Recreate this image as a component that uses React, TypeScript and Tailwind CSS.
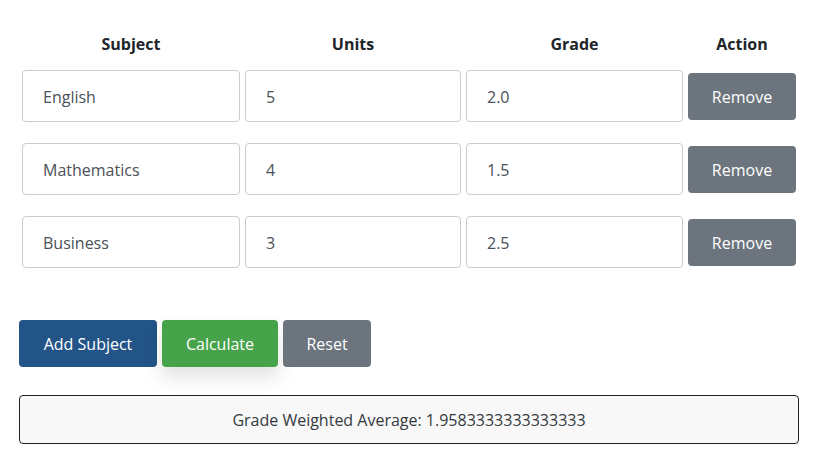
const subjects = [
  { name: "English", units: "5", grade: "2.0" },
  { name: "Mathematics", units: "4", grade: "1.5" },
  { name: "Business", units: "3", grade: "2.5" },
];

const cols = "grid grid-cols-[218px_216px_217px_108px] gap-x-[5px]";

export default function App() {
  return (
    <main
      className="min-h-screen bg-white text-[16px] text-[#212529]"
      style={{ fontFamily: '"Open Sans", "Noto Sans", sans-serif' }}
    >
      <div className="px-[19px] pt-[32px]">
        <div className={`${cols} px-[3px]`}>
          {["Subject", "Units", "Grade", "Action"].map((h) => (
            <div key={h} className="h-[24px] text-center font-bold leading-[24px]">
              {h}
            </div>
          ))}
        </div>

        <div className="mt-[14px] flex flex-col gap-y-[21px] px-[3px]">
          {subjects.map((s) => (
            <div key={s.name} className={`${cols} items-center`}>
              <div className="flex h-[52px] items-center rounded-[4px] border border-[#cccccc] pl-[20px] pt-[1px] text-[#495057]">
                {s.name}
              </div>
              <div className="flex h-[52px] items-center rounded-[4px] border border-[#cccccc] pl-[20px] pt-[1px] text-[#495057]">
                {s.units}
              </div>
              <div className="flex h-[52px] items-center rounded-[4px] border border-[#cccccc] pl-[20px] pt-[1px] text-[#495057]">
                {s.grade}
              </div>
              <button className="h-[47px] rounded-[4px] bg-[#6c757d] pt-[1px] text-white">
                Remove
              </button>
            </div>
          ))}
        </div>

        <div className="mt-[52px] flex gap-x-[5px]">
          <button className="h-[47px] w-[138px] rounded-[4px] bg-[#235487] pt-[1px] text-white">
            Add Subject
          </button>
          <button className="h-[47px] w-[116px] rounded-[4px] bg-[#46a34a] pt-[1px] text-white shadow-[0_10px_20px_rgba(0,0,0,0.12)]">
            Calculate
          </button>
          <button className="h-[47px] w-[88px] rounded-[4px] bg-[#6c757d] pt-[1px] text-white">
            Reset
          </button>
        </div>

        <div className="mt-[28px] flex h-[49px] w-[780px] items-center justify-center rounded-[4px] border border-[#222222] bg-[#f8f8f8] pt-[1px] text-[#343a40]">
          Grade Weighted Average: 1.9583333333333333
        </div>
      </div>
    </main>
  );
}
